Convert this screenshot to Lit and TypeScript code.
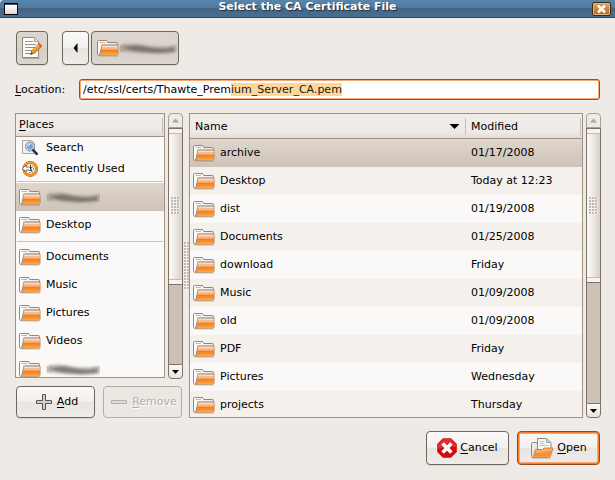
import { LitElement, html, css, svg, nothing } from "lit";
import { customElement, property, query } from "lit/decorators.js";
import { classMap } from "lit/directives/class-map.js";

const folderIcon = html`<svg class="folder" width="22" height="18" viewBox="0 0 22 18" aria-hidden="true">
  <defs>
    <linearGradient id="fo" x1="0" y1="0" x2="0" y2="1">
      <stop offset="0" stop-color="#fbd3b2" /><stop offset=".4" stop-color="#f8ac72" />
      <stop offset=".5" stop-color="#f47d22" /><stop offset="1" stop-color="#fbb04a" />
    </linearGradient>
    <linearGradient id="fb" x1="0" y1="0" x2="1" y2="0">
      <stop offset="0" stop-color="#ffffff" /><stop offset="1" stop-color="#e4e2df" />
    </linearGradient>
  </defs>
  <path d="M2 17.300h19" stroke="#000" stroke-opacity=".14" />
  <path d="M.5 15.500V2.200Q.6 1.500 1.600 1.500h8l1.200 2h8.700q1 0 1 1.200v2.500H5L2.500 16.300Q.6 16.400.5 15.500z" fill="url(#fb)" stroke="#8d8a86" />
  <path d="M2.500 3.500h5.500" stroke="#f9a868" />
  <path d="M4.500 6.200h16.700v8.600q-.1 1.700-1.600 1.700H2.200q1.400-.7 1.600-3z" fill="url(#fo)" stroke="#b98d6c" stroke-width=".7" />
  <path d="M4.500 6h16.500" stroke="#8f8983" stroke-width=".8" />
  <path d="M5.200 7.200h15.300" stroke="#fff" stroke-opacity=".6" />
</svg>`;

const searchIcon = html`<svg width="16" height="16" viewBox="0 0 16 16" aria-hidden="true">
  <path d="M.5.5h9l3 3v10H.5z" fill="#f1f1f0" stroke="#a9a9a7" />
  <circle cx="8" cy="6.500" r="4.500" fill="#c6dcef" stroke="#83898d" />
  <circle cx="8" cy="6.500" r="2.900" fill="#72a4d3" />
  <path d="M6 6q.5-2 2.500-2" stroke="#fff" fill="none" />
  <path d="M11.400 10.300l3.300 3.500" stroke="#2c3034" stroke-width="2.600" stroke-linecap="round" />
</svg>`;

const recentIcon = html`<svg width="16" height="16" viewBox="0 0 16 16" aria-hidden="true">
  <circle cx="8.200" cy="8" r="6.400" fill="#f4f3f0" stroke="#c26a12" stroke-width="3" />
  <circle cx="8.200" cy="8" r="6.400" fill="none" stroke="#f79428" stroke-width="2" />
  <path d="M.5 7.500 4 4v2q3-.5 4.500 1.500v2.500Q6.500 8.500 4 9v2z" fill="#fff" stroke="#5f5f5d" stroke-width=".9" />
  <path d="M8.500 3.800v4l2.300-2.400M9 8l1.300 3.200M8 12v-1M12 8h-1" stroke="#333" fill="none" />
</svg>`;

const editIcon = html`<svg width="22" height="24" viewBox="0 0 22 24" aria-hidden="true">
  <path d="M2 22.500h17" stroke="#000" stroke-opacity=".2" />
  <path d="M1.500 1.500h12l4 4v16h-16z" fill="#fbfbfa" stroke="#8b8985" />
  <path d="M13.500 1.500v4h4" fill="#e3e2df" stroke="#a5a39f" />
  <path d="M4 5.500h8M4 8.500h11M4 11.500h10M4 14.500h7M4 17.500h5" stroke="#94928e" />
  <path d="M9.500 18.500l1.700-4.200 7-6.800 2.600 2.500-7 6.800z" fill="#f79518" stroke="#a65a0a" stroke-width=".9" />
  <path d="M11.500 14.800l7-6.700" stroke="#fdd06a" />
  <path d="M17 8.500l1.500-1.300 2.500 2.400-1.400 1.400z" fill="#e0513e" />
  <path d="M9.400 18.700l.9-2 1.300 1.100z" fill="#222" />
</svg>`;

const stopIcon = html`<svg width="20" height="20" viewBox="0 0 20 20" aria-hidden="true">
  <path d="M6 .2h8L19.800 6v8L14 19.800H6L.2 14V6z" fill="#cf0a10" />
  <path d="M6.400 1h7.200l5.400 5.400V9q-9-1-18 2V6.400z" fill="#de3034" />
  <path d="M5.600 5.600l8.800 8.800M14.400 5.600l-8.800 8.800" stroke="#fff" stroke-width="3.600" />
</svg>`;

const openIcon = html`<svg width="24" height="22" viewBox="0 0 24 22" aria-hidden="true">
  <path d="M2 21.200h19" stroke="#000" stroke-opacity=".15" />
  <path d="M1.500 19.500V6.500q0-1 1-1h4l1 1.500h12v6" fill="#e9e8e6" stroke="#8d8a86" />
  <path d="M7.500 13V1.500h9l4.500 4V13z" fill="#f8f8f7" stroke="#8d8a86" />
  <path d="M16.500 1.500v4H21" fill="#c9c8c5" stroke="#a5a39f" />
  <path d="M9.500 4.500h5M9.500 6.500h5M9.500 8.500h9" stroke="#c3c1bd" />
  <path d="M5.500 12.500h7l1.500-1.500h9L20.500 19q-.3 1.500-1.600 1.500H2q1.300-.4 1.700-2z" fill="#fbb06a" stroke="#c0713a" stroke-width=".8" />
  <path d="M5 15.500q8 1 16-2.500l-1.500 6.500H3.500z" fill="#f68a2a" fill-opacity=".8" />
</svg>`;

const plusIcon = html`<svg width="16" height="16" viewBox="0 0 16 16" aria-hidden="true">
  <path d="M6.500.5h3v6h6v3h-6v6h-3v-6h-6v-3h6z" fill="#cfd1cc" stroke="#555753" />
</svg>`;

const minusIcon = html`<svg width="16" height="16" viewBox="0 0 16 16" aria-hidden="true">
  <path d="M.5 6.500h15v3H.5z" fill="#dedcd8" stroke="#b3b0ab" />
</svg>`;

const arrow = (d: string) =>
  html`<svg class="tri" width="11" height="7" viewBox="0 0 11 7" aria-hidden="true">${svg`<path d=${d} fill="currentColor" />`}</svg>`;

@customElement("scroll-bar")
class ScrollBar extends LitElement {
  @property({ type: Number }) portion = 50;

  static styles = css`
    :host { display: flex; flex-direction: column; box-sizing: border-box; width: 15px; }
    button {
      flex: none; box-sizing: border-box; width: 15px; height: 15px; padding: 0;
      display: flex; align-items: center; justify-content: center;
      border: 1px solid #7f7264; background: linear-gradient(#fbfaf9, #e9e5e0); color: #000;
    }
    svg { flex: none; display: block; }
    .up { border-color: #ab9f90; border-radius: 4px 4px 0 0; background: #eeebe6; color: #aaa69f; }
    .down { border-radius: 0 0 4px 4px; }
    .trough { flex: 1; display: flex; flex-direction: column; background: #cbc1b7; border: solid #7f7264; border-width: 0 1px; }
    .thumb {
      display: flex; flex-direction: column; justify-content: space-between; align-items: center; box-sizing: border-box;
      border: solid #7f7264; border-width: 1px 0;
      background: linear-gradient(90deg, #fbfaf9, #f0ece8 40%, #d8d0c9);
    }
    .end { align-self: stretch; height: 4px; background: #f6f4f2; border-bottom: 1px solid #c4bbb2; }
    .end:last-child { border-bottom: 0; border-top: 1px solid #c4bbb2; }
    .grip { width: 9px; height: 18px; background: radial-gradient(circle at 1px 1px, #c0b8b0 1px, #fff 1px, transparent 2px) 0 0 / 3px 3px; }
  `;

  render() {
    return html`
      <button class="up" aria-label="Scroll up">${arrow("M5.500 1.500 9 5.500h-7z")}</button>
      <div class="trough">
        <div class="thumb" style="height:${this.portion}%">
          <span class="end"></span><span class="grip"></span><span class="end"></span>
        </div>
      </div>
      <button class="down" aria-label="Scroll down">${arrow("M5.500 6 9 2h-7z")}</button>
    `;
  }
}

type Place = { name: string; small?: unknown; blurred?: boolean; selected?: boolean; rule?: boolean };

const places: Place[] = [
  { name: "Search", small: searchIcon },
  { name: "Recently Used", small: recentIcon, rule: true },
  { name: "", blurred: true, selected: true },
  { name: "Desktop", rule: true },
  { name: "Documents" },
  { name: "Music" },
  { name: "Pictures" },
  { name: "Videos" },
  { name: "", blurred: true },
];

const files: [string, string][] = [
  ["archive", "01/17/2008"],
  ["Desktop", "Today at 12:23"],
  ["dist", "01/19/2008"],
  ["Documents", "01/25/2008"],
  ["download", "Friday"],
  ["Music", "01/09/2008"],
  ["old", "01/09/2008"],
  ["PDF", "Friday"],
  ["Pictures", "Wednesday"],
  ["projects", "Thursday"],
];

@customElement("app-root")
class AppRoot extends LitElement {
  @query("#location") location!: HTMLInputElement;

  static styles = css`
    :host {
      display: flex; flex-direction: column; min-height: 100vh; box-sizing: border-box;
      background: #eeebe7; color: #000; font: 11px/14px "DejaVu Sans", sans-serif;
    }
    button, input { font: inherit; color: inherit; box-sizing: border-box; }
    svg { flex: none; display: block; }
    u { text-underline-offset: 2px; text-decoration-thickness: 1px; }

    .titlebar {
      display: grid; grid-template-columns: 24px 1fr 24px; align-items: center; height: 18px; box-sizing: border-box;
      border-bottom: 1px solid #30485f; border-radius: 4px 0 0 0;
      background: linear-gradient(#5787ae, #4f7a9f 45%, #456583 50%, #4a6f92);
    }
    h1 { margin: 0; padding-bottom: 3px; font: bold 11px/14px "DejaVu Sans", sans-serif; text-align: center; color: #fff; text-shadow: 1px 1px 1px #1b2b3a; }
    .winmenu { width: 14px; height: 12px; margin-left: 4px; padding: 0; border: 1px solid #000; background: linear-gradient(#555 1px, #fff 1px, #dcdad6); }
    .close {
      width: 19px; height: 14px; margin-left: 1px; padding: 0; display: grid; place-items: center;
      border: 1px solid #3a2a18; border-radius: 2px; background: linear-gradient(#dba46a, #c98436 50%, #b5691c);
      box-shadow: inset 0 0 0 1px #e4b685;
    }

    main { flex: 1; display: flex; flex-direction: column; padding: 13px 14px 15px 15px; }
    .btn {
      display: flex; align-items: center; justify-content: center; gap: 3px; padding: 0;
      border: 1px solid #6e675c; border-radius: 4px; box-shadow: 0 1px 1px #d8d3cc;
      background: linear-gradient(#faf9f8, #f2f0ed 49%, #e8e4df 51%, #f0ede9);
    }
    .path { display: flex; margin-left: 1px; height: 34px; }
    .path .btn { height: 34px; }
    .path .pressed { background: linear-gradient(#dcd6d0, #d9d3cc 49%, #d5cec6 51%, #dcd6cf); }
    .edit { width: 32px; margin-right: 14px; }
    .back { width: 27px; margin-right: 2px; }
    .crumb { width: 88px; gap: 0; padding-left: 3px; }

    .location { display: flex; align-items: center; margin: 14px 1px 0 0; }
    .location label { width: 64px; }
    .location input {
      flex: 1; min-width: 0; height: 21px; padding: 0 3px; outline: 0; background: #fff;
      border: 1px solid #a34c1a; border-radius: 3px; box-shadow: inset 0 0 0 1px #f6a772; caret-color: transparent;
    }
    .location input::selection { background: #ffd799; color: #1a1a1a; }

    .panes { flex: 1; display: grid; grid-template-columns: 168px 6px 1fr; margin-top: 13px; min-height: 0; }
    .side { display: flex; flex-direction: column; gap: 7px; }
    .listbox { flex: 1; display: flex; gap: 3px; min-height: 0; }
    .frame { flex: 1; min-width: 0; box-sizing: border-box; border: 1px solid #9f9285; background: #faf9f7; overflow: hidden; }
    .side .frame { height: 265px; }
    .files .frame { height: 305px; }
    .head { background: linear-gradient(#f0ede9, #eeebe7 70%, #dfdad4); border-bottom: 1px solid #9f9285; }
    .places-head { display: flex; align-items: center; justify-content: space-between; height: 22px; padding: 0 1px 0 3px; }
    .places-head::after { content: ""; width: 1px; height: 15px; background: #c4bdb5; }
    ul { list-style: none; margin: 0; padding: 0; }
    li { display: flex; align-items: center; gap: 5px; height: 28px; padding-left: 3px; }
    li.compact { height: 21px; padding-left: 6px; gap: 8px; }
    li.rule { position: relative; margin-bottom: 4px; }
    li.rule::after { content: ""; position: absolute; left: 1px; right: 1px; bottom: -3px; height: 1px; background: #c6c4c1; }
    .selected { background: linear-gradient(#dfd6cd, #cec3b8); }

    .handle { width: 5px; height: 48px; align-self: center; margin-left: 1px; background: radial-gradient(circle at 1px 1px, #c0b8b0 1px, #fff 1px, transparent 2px) 0 0 / 3px 3px; }

    .actions { display: flex; gap: 8px; margin: 0 1px; }
    .actions .btn { flex: 1; height: 32px; gap: 5px; padding-left: 3px; }
    .btn:disabled { color: #b3b0ab; border-color: #b5aca1; background: #ebe7e2; box-shadow: none; text-shadow: 1px 1px 0 #fff; }

    table { width: 100%; border-collapse: collapse; table-layout: fixed; }
    th { height: 25px; padding: 0 0 0 5px; font-weight: normal; text-align: left; }
    td { height: 28px; padding: 0 0 0 5px; }
    th:last-child, td:last-child { width: 111px; }
    td:first-child { padding-left: 3px; }
    thead { background: linear-gradient(#f0ede9, #eeebe7 70%, #dfdad4); box-shadow: inset 0 -1px #9f9285; }
    tbody tr:nth-child(even) { background: #f4f1ec; }
    tbody tr.selected { background: linear-gradient(#dfd6cd, #cec3b8); }
    .cell { display: flex; align-items: center; gap: 5px; }
    .cell.date { justify-content: space-between; padding-right: 1px; }
    .cell.date::after, .cell.sort::after { content: ""; width: 1px; height: 17px; background: #c4bdb5; }
    .cell.sort .tri { margin-left: auto; }

    footer { display: flex; justify-content: flex-end; gap: 8px; margin: 13px 1px 0 0; }
    footer .btn { width: 83px; height: 34px; }
    .btn.default { border-color: #8f4a20; box-shadow: inset 0 0 0 1px #f47f30, inset 0 0 0 2px #f9a468; }
  `;

  firstUpdated() {
    const start = this.location.value.indexOf("ium_");
    this.location.focus();
    this.location.setSelectionRange(start, this.location.value.length);
  }

  smudge(width: number) {
    return html`<svg width=${width} height="18" viewBox="0 0 56 18" preserveAspectRatio="none" aria-hidden="true">
      <defs>
        <filter id="b" x="-20%" y="-50%" width="140%" height="200%"><feGaussianBlur stdDeviation="1.2" /></filter>
      </defs>
      <g filter="url(#b)">
        <path d="M1 6q9-3 20-1 16 4 34 1v8q-12 2-26 1Q12 14 1 12z" fill="#99938c" fill-opacity=".6" />
        <path d="M5 8q12-3 22 0 13 3 26 1v3q-14 3-26 1-12 0-22-4z" fill="#5b5650" fill-opacity=".6" />
      </g>
      <path d="M2 6v7M5 5v8M49 7v6M52 7v6M55 6v7" stroke="#6f6962" stroke-opacity=".35" />
    </svg>`;
  }

  render() {
    return html`
      <header class="titlebar">
        <button class="winmenu" aria-label="Window menu"></button>
        <h1>Select the CA Certificate File</h1>
        <button class="close" aria-label="Close">
          <svg width="9" height="8" viewBox="0 0 9 8"><path d="M1 .5l7 7M8 .5l-7 7" stroke="#fff" stroke-width="2.600" /></svg>
        </button>
      </header>
      <main>
        <nav class="path">
          <button class="btn pressed edit" aria-label="Type a file name">${editIcon}</button>
          <button class="btn back" aria-label="Back">
            <svg width="5" height="10" viewBox="0 0 5 10"><path d="M4.500 0v10L.5 5z" /></svg>
          </button>
          <button class="btn pressed crumb" aria-label="Home folder">${folderIcon}${this.smudge(58)}</button>
        </nav>
        <div class="location">
          <label for="location"><u>L</u>ocation:</label>
          <input id="location" type="text" spellcheck="false" value="/etc/ssl/certs/Thawte_Premium_Server_CA.pem" />
        </div>
        <div class="panes">
          <section class="side">
            <div class="listbox">
              <div class="frame">
                <div class="head places-head"><span><u>P</u>laces</span></div>
                <ul>
                  ${places.map(
                    (p) => html`<li class=${classMap({ compact: !!p.small, rule: !!p.rule, selected: !!p.selected })}>
                      ${p.small ?? folderIcon}${p.blurred ? this.smudge(54) : nothing}<span>${p.name}</span>
                    </li>`
                  )}
                </ul>
              </div>
              <scroll-bar .portion=${66.5}></scroll-bar>
            </div>
            <div class="actions">
              <button class="btn">${plusIcon}<span><u>A</u>dd</span></button>
              <button class="btn" disabled>${minusIcon}<span><u>R</u>emove</span></button>
            </div>
          </section>
          <div class="handle"></div>
          <section class="files listbox">
            <div class="frame">
              <table>
                <thead>
                  <tr>
                    <th><div class="cell sort">Name${arrow("M.5 1h10l-5 5z")}</div></th>
                    <th><div class="cell date">Modified</div></th>
                  </tr>
                </thead>
                <tbody>
                  ${files.map(
                    ([name, date], i) => html`<tr class=${classMap({ selected: i === 0 })}>
                      <td><div class="cell">${folderIcon}<span>${name}</span></div></td>
                      <td>${date}</td>
                    </tr>`
                  )}
                </tbody>
              </table>
            </div>
            <scroll-bar .portion=${56.4}></scroll-bar>
          </section>
        </div>
        <footer>
          <button class="btn">${stopIcon}<span><u>C</u>ancel</span></button>
          <button class="btn default">${openIcon}<span><u>O</u>pen</span></button>
        </footer>
      </main>
    `;
  }
}
